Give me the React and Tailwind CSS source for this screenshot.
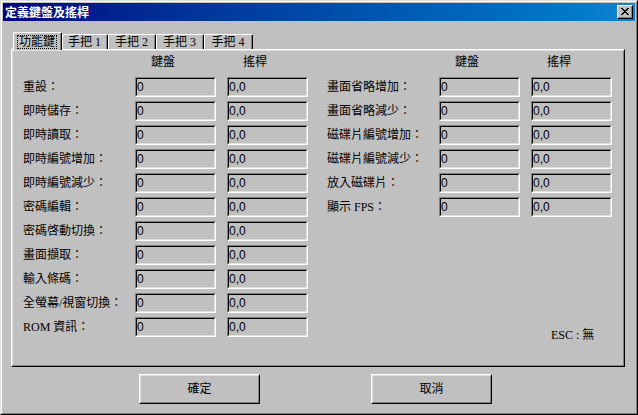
import React from "react";

const FONT = { fontFamily: '"Liberation Serif", "Noto Sans CJK TC", serif' };
const CJK = { fontFamily: '"Noto Sans CJK TC", "Liberation Sans", sans-serif' };
const SANS = { fontFamily: '"Liberation Sans", "Noto Sans CJK TC", sans-serif' };

const leftRows = [
  "重設：",
  "即時儲存：",
  "即時讀取：",
  "即時編號增加：",
  "即時編號減少：",
  "密碼編輯：",
  "密碼啓動切換：",
  "畫面擷取：",
  "輸入條碼：",
  "全螢幕/視窗切換：",
  "ROM 資訊：",
];

const rightRows = [
  "畫面省略增加：",
  "畫面省略減少：",
  "磁碟片編號增加：",
  "磁碟片編號減少：",
  "放入磁碟片：",
  "顯示 FPS：",
];

function Field({ value }) {
  return (
    <div className="w-[81px] h-[20px] border border-t-[#808080] border-l-[#808080] border-r-white border-b-white">
      <div
        className="h-full border border-t-[#000] border-l-[#000] border-r-[#dfdfdf] border-b-[#dfdfdf] bg-[#c0c0c0] text-[12px] leading-[16px] text-black"
        style={SANS}
      >
        {value}
      </div>
    </div>
  );
}

function Row({ label }) {
  return (
    <div className="flex h-[24px] items-start">
      <div className="w-[112px] h-[20px] leading-[20px] text-[12px] text-black whitespace-nowrap">{label}</div>
      <Field value="0" />
      <div className="w-[11px]" />
      <Field value="0,0" />
    </div>
  );
}

function Header() {
  return (
    <div className="flex h-[12px] leading-[12px] text-[12px] text-black">
      <div className="w-[112px]" />
      <div className="w-[81px] pl-[16px]">鍵盤</div>
      <div className="w-[11px]" />
      <div className="w-[81px] pl-[16px]">搖桿</div>
    </div>
  );
}

function Tab({ label, w, selected }) {
  if (selected) {
    return (
      <div
        className="relative z-10 h-[18px] -mb-[1px] border-l border-t border-white border-r border-r-black rounded-tl-[2px] rounded-tr-[2px] bg-[#c0c0c0]"
        style={{ width: w }}
      >
        <div className="h-full border-r border-r-[#808080] flex items-start justify-center pt-[2px]">
          <span className="border border-dotted border-black px-[1px] h-[14px] leading-[12px] text-[12px] text-black">
            {label}
          </span>
        </div>
      </div>
    );
  }
  return (
    <div
      className="h-[15px] border-l border-t border-white border-r border-r-black rounded-tl-[2px] rounded-tr-[2px] bg-[#c0c0c0]"
      style={{ width: w }}
    >
      <div className="h-full border-r border-r-[#808080] flex items-center justify-center text-[12px] leading-[12px] text-black whitespace-nowrap">
        {label}
      </div>
    </div>
  );
}

function Button({ label }) {
  return (
    <div className="w-[121px] h-[30px] border border-t-white border-l-white border-r-black border-b-black bg-[#c0c0c0]">
      <div className="h-full border border-t-[#dfdfdf] border-l-[#dfdfdf] border-r-[#808080] border-b-[#808080] flex items-center justify-center text-[12px] text-black">
        {label}
      </div>
    </div>
  );
}

export default function App() {
  return (
    <div
      className="w-[638px] h-[415px] bg-[#c0c0c0] border border-t-[#dfdfdf] border-l-[#dfdfdf] border-r-black border-b-black"
      style={FONT}
    >
      <div className="h-full border border-t-white border-l-white border-r-[#808080] border-b-[#808080] p-[1px] flex flex-col">
        {/* Title bar */}
        <div className="h-[18px] shrink-0 flex items-center justify-between pl-[2px] pr-[2px] bg-linear-to-r from-[#000080] to-[#1084d0]">
          <span className="text-white font-bold text-[12px] leading-[14px]" style={CJK}>
            定義鍵盤及搖桿
          </span>
          <div className="w-[16px] h-[14px] border border-t-white border-l-white border-r-black border-b-black bg-[#c0c0c0]">
            <div className="h-full border-r border-b border-r-[#808080] border-b-[#808080] flex items-center justify-center">
              <svg width="8" height="7" viewBox="0 0 8 7" shapeRendering="crispEdges">
                <path
                  d="M0 0h2v1h-2zM6 0h2v1h-2zM1 1h2v1h-2zM5 1h2v1h-2zM2 2h4v1h-4zM3 3h2v1h-2zM2 4h4v1h-4zM1 5h2v1h-2zM5 5h2v1h-2zM0 6h2v1h-2zM6 6h2v1h-2z"
                  fill="#000"
                />
              </svg>
            </div>
          </div>
        </div>

        {/* Tabs */}
        <div className="mt-[11px] ml-[10px] h-[17px] flex items-end shrink-0">
          <Tab label="功能鍵" w={49} selected />
          <Tab label="手把 1" w={46} />
          <Tab label="手把 2" w={48} />
          <Tab label="手把 3" w={48} />
          <Tab label="手把 4" w={49} />
        </div>

        {/* Panel */}
        <div className="ml-[8px] w-[614px] h-[318px] shrink-0 border border-t-white border-l-white border-r-black border-b-black">
          <div className="h-full border border-t-[#dfdfdf] border-l-[#dfdfdf] border-r-[#808080] border-b-[#808080] pl-[10px] pt-[5px] flex">
            <div className="flex flex-col w-[304px]">
              <Header />
              <div className="mt-[9px] flex flex-col">
                {leftRows.map((l) => (
                  <Row key={l} label={l} />
                ))}
              </div>
            </div>
            <div className="flex flex-col">
              <Header />
              <div className="mt-[9px] flex flex-col">
                {rightRows.map((l) => (
                  <Row key={l} label={l} />
                ))}
              </div>
              <div className="mt-[108px] pl-[224px] h-[12px] leading-[12px] text-[12px] text-black whitespace-nowrap">
                ESC : 無
              </div>
            </div>
          </div>
        </div>

        {/* Buttons */}
        <div className="mt-[7px] ml-[136px] flex gap-[111px] shrink-0">
          <Button label="確定" />
          <Button label="取消" />
        </div>
      </div>
    </div>
  );
}
